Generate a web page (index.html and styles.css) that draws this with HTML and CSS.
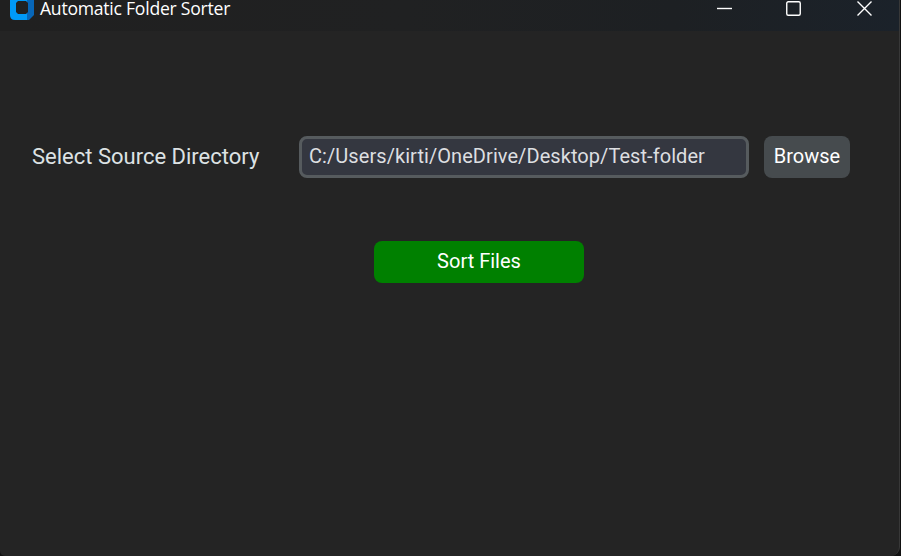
FILE: index.html
```html
<!DOCTYPE html>
<html lang="en">
<head>
<meta charset="utf-8">
<title>Automatic Folder Sorter</title>
<link rel="stylesheet" href="styles.css">
</head>
<body>
<div class="window">
  <header class="titlebar">
    <svg class="app-icon" width="24" height="20" viewBox="0 0 24 20">
      <path fill="#0099f7" d="M0-4H18V20H5Q0 20 0 15Z"/>
      <path fill="#0766b8" d="M18-4H24V15L19 20H17V-4Z"/>
      <path fill="#202122" d="M8 1H16L18 3V12L16 14H8L6 12V3Z"/>
    </svg>
    <span class="title">Automatic Folder Sorter</span>
    <div class="controls">
      <svg width="16" height="17" viewBox="0 0 16 17"><path d="M0 8.5H15"/></svg>
      <svg width="16" height="17" viewBox="0 0 16 17"><rect x="-.25" y="1.75" width="13.5" height="13.5" rx="1.5"/></svg>
      <svg width="16" height="17" viewBox="0 0 16 17"><path d="M.5 1.5L14.5 15.5M14.5 1.5L.5 15.5"/></svg>
    </div>
  </header>
  <main>
    <div class="row">
      <span class="label">Select Source Directory</span>
      <div class="entry">C:/Users/kirti/OneDrive/Desktop/Test-folder</div>
      <button class="browse">Browse</button>
    </div>
    <button class="sort">Sort Files</button>
  </main>
</div>
</body>
</html>
```
FILE: styles.css
```css
* { box-sizing: border-box; }
body {
  margin: 0;
  height: 556px;
  overflow: hidden;
  background: #111;
  font-family: Roboto, sans-serif;
}
.window {
  width: 900px;
  height: 556px;
  overflow: hidden;
  background: #242424;
  border-right: 1px solid #383838;
  border-radius: 0 0 9px 5px;
}
.titlebar {
  display: flex;
  align-items: flex-start;
  height: 31px;
  padding-left: 10px;
  background: linear-gradient(90deg, #202020 0%, #202122 45%, #1d2023 75%, #1b222a 100%);
}
.app-icon { display: block; }
.title {
  display: block;
  margin-left: 6px;
  font: 17.6px/16px "Open Sans", "Noto Sans", sans-serif;
  letter-spacing: -0.25px;
  white-space: nowrap;
  color: #fff;
}
.controls {
  display: flex;
  gap: 54px;
  margin: 0 26px 0 auto;
}
.controls svg {
  display: block;
  overflow: visible;
  fill: none;
  stroke: #fff;
  stroke-width: 1.4;
}
.row {
  display: flex;
  align-items: center;
  padding: 105px 0 0 32px;
}
.label {
  width: 267px;
  font-size: 22px;
  line-height: 42px;
  white-space: nowrap;
  color: #dde2e4;
}
.entry {
  width: 450px;
  height: 42px;
  margin-right: 15px;
  padding-left: 7px;
  border: 3px solid #565b5e;
  border-radius: 8px;
  background: #343740;
  font-size: 20px;
  line-height: 35px;
  letter-spacing: 0.065px;
  white-space: nowrap;
  color: #dddfe1;
}
button {
  display: block;
  height: 42px;
  padding: 0 0 2px;
  border: 0;
  border-radius: 8px;
  font: 20px/40px Roboto, sans-serif;
  color: #fff;
}
.browse { width: 86px; background: #464b4e; }
.sort { width: 210px; margin: 63px 0 0 374px; background: #008000; }
```
